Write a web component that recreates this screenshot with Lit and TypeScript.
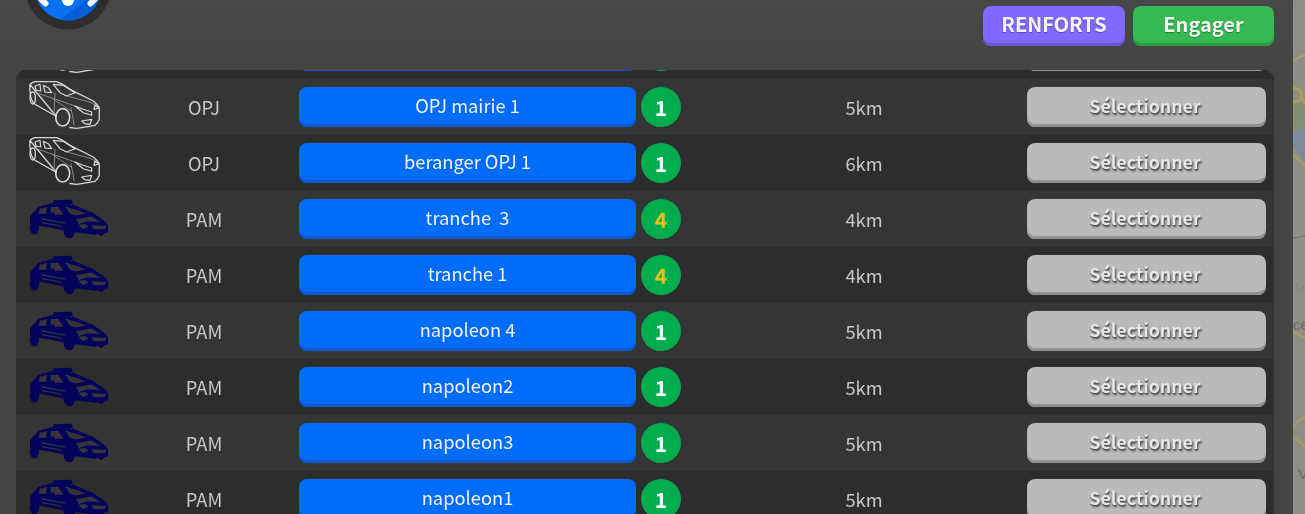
import { LitElement, html, css, svg } from "lit";
import { customElement } from "lit/decorators.js";

type Row = { kind: "opj" | "pam"; type: string; name: string; n: number; km: string };

const rows: Row[] = [
  { kind: "opj", type: "OPJ", name: "", n: 1, km: "" },
  { kind: "opj", type: "OPJ", name: "OPJ mairie 1", n: 1, km: "5km" },
  { kind: "opj", type: "OPJ", name: "beranger OPJ 1", n: 1, km: "6km" },
  { kind: "pam", type: "PAM", name: "tranche  3", n: 4, km: "4km" },
  { kind: "pam", type: "PAM", name: "tranche 1", n: 4, km: "4km" },
  { kind: "pam", type: "PAM", name: "napoleon 4", n: 1, km: "5km" },
  { kind: "pam", type: "PAM", name: "napoleon2", n: 1, km: "5km" },
  { kind: "pam", type: "PAM", name: "napoleon3", n: 1, km: "5km" },
  { kind: "pam", type: "PAM", name: "napoleon1", n: 1, km: "5km" },
];

const opjCar = svg`<svg class="car opj" viewBox="0 0 72 48" width="72" height="48" fill="none" stroke="#d8d8d8" stroke-linecap="round" stroke-linejoin="round">
  <path stroke-width="1.300" d="M1 3.500 Q3 .8 7.700 .3 L27.700 .7 Q34 3 41 8.300 L64.300 20 Q68 23 70.300 26.700 L70.300 38.300 Q69 42 66 44.300 L47.700 47.300 L41 46.500 M27.500 35.500 L6 23.300 Q2 20 1.500 14 Q.5 8 1 3.500 Z"/>
  <path stroke-width="1.200" d="M6 5 L11 3.300 L11.700 10 L7 9 Z M14.300 4.300 L19.300 6.700 L22.700 11.700 L16 11 Z M24.300 3.300 L34.300 4.300 L46 11.700 L37.700 15 L31 11.700 Z"/>
  <ellipse stroke-width="1.300" cx="3.700" cy="17" rx="2.700" ry="6"/>
  <ellipse stroke-width="1.600" cx="33.700" cy="36.300" rx="7" ry="8.700"/>
  <path stroke-width=".9" stroke="#909090" d="M5 11 L26 18 L46 25 M26 11.700 L25 34 M37.700 15 L62 21.500 L70 26.500 M42 27 Q44 36 45 44 M24 18 L42 30"/>
  <path stroke-width="1.200" d="M46 25 L54.300 31.700 L62.700 34.300 L62.700 31 L54.300 28.300 Z M52.700 40 L62.700 38.300 L61 43.300 L56 42.700 Z M66 24 L69.500 27 L65 28.500 Z"/>
</svg>`;

const pamCar = svg`<svg class="car" viewBox="0 0 80 40" width="80" height="40">
  <g fill="#03035a">
    <path d="M24.300 1.300 L42.700 .7 L43.700 5 L24.300 5 Z"/>
    <path d="M1 17.300 L9.300 8 L22.700 4 L44.300 5.700 L64.300 14 L77 23.300 L79.300 27.300 L78.700 33.300 L66 35.700 L46 33.300 L34.300 31.300 L11 27 L1 26 Z"/>
    <ellipse cx="5.300" cy="29" rx="4.700" ry="6.500"/>
    <ellipse cx="40.300" cy="32.300" rx="5.500" ry="7"/>
    <path d="M68 33 L76 33 Q74 37.500 71 37 Z"/>
  </g>
  <g fill="#34343a">
    <path d="M11 9.700 L17.700 8 L17 14.700 L9.300 14.700 Z M21.700 8 L29.300 8 L34.300 15.700 L26 15.700 L24 13 L21.700 14.700 Z M36 7.300 L57 14.300 L47.700 16.500 L41 14.700 Z"/>
    <path d="M13 19.500 L36 23.500 L36 24.700 L13 20.700 Z M13 23 L33 26.700 L33 27.800 L13 24.200 Z"/>
    <path d="M47 20 L62 17.500 L72 23 L58 22.500 L50 25 Z M49 26 L54 30 L60 28 L56 25 Z M63 26 L77 27 L76 30 L64 30 Z"/>
  </g>
</svg>`;

@customElement("app-root")
export class AppRoot extends LitElement {
  static styles = css`
    :host {
      display: flex;
      width: 1305px;
      height: 514px;
      overflow: hidden;
      font-family: "Noto Sans CJK JP", "Noto Sans", sans-serif;
    }
    .panel {
      width: 1293px;
      flex: none;
      background: linear-gradient(#484848, #444444 70px);
      box-sizing: border-box;
      padding: 0 19px 0 16px;
      display: flex;
      flex-direction: column;
    }
    .map {
      flex: 1;
      position: relative;
      background: #8f8f87;
      overflow: hidden;
    }
    .map svg {
      display: block;
    }
    .label {
      position: absolute;
      color: #6c6c68;
      font-size: 15px;
      line-height: 16px;
      font-family: "Liberation Sans", sans-serif;
    }
    .ces {
      left: 0;
      top: 317px;
    }
    .ve {
      left: 5px;
      top: 466px;
    }
    .head {
      flex: none;
      height: 70px;
      display: flex;
      justify-content: space-between;
      align-items: flex-start;
    }
    .logo {
      display: block;
      margin: -58px 0 0 8px;
    }
    .actions {
      display: flex;
      gap: 8px;
      padding-top: 6px;
      will-change: transform;
    }
    .action {
      width: 142px;
      height: 40px;
      box-sizing: border-box;
      border-radius: 8px;
      display: flex;
      align-items: center;
      justify-content: center;
      color: #f4f4f4;
      font-size: 20px;
      line-height: 24px;
      font-weight: 700;
      padding-bottom: 4px;
      text-shadow: 0 1px 1px rgba(0, 0, 0, 0.3);
    }
    .green {
      width: 141px;
      background: #35b951;
      box-shadow: inset 0 -3px 0 #2c9a43;
    }
    .purple {
      background: #8069ff;
      box-shadow: inset 0 -3px 0 #6a55d6;
    }
    .table {
      flex: 1;
      min-height: 0;
      overflow: hidden;
      border-radius: 10px 10px 0 0;
      background: #2d2d2d;
      will-change: transform;
    }
    .rows {
      margin-top: -47px;
    }
    .row {
      height: 56px;
      display: grid;
      grid-template-columns: 283px 337px 45px 346px 239px;
      align-items: center;
      color: #c8c8c8;
      font-size: 18.300px;
      line-height: 24px;
      background: #2d2d2d;
    }
    .row:nth-child(even) {
      background: #353535;
    }
    .carcell {
      display: grid;
      grid-template-columns: 100px 150px;
      align-items: center;
      padding-left: 13px;
      box-sizing: border-box;
    }
    .car {
      display: block;
    }
    .car.opj {
      margin-top: -4px;
    }
    .type {
      text-align: center;
    }
    .name {
      height: 40px;
      box-sizing: border-box;
      border-radius: 8px;
      background: #006cfb;
      box-shadow: inset 0 -3px 0 #0058d2;
      color: #f2f2f2;
      display: flex;
      align-items: center;
      justify-content: center;
      white-space: pre;
      padding-bottom: 5px;
    }
    .badge {
      width: 40px;
      height: 40px;
      margin-left: 5px;
      border-radius: 50%;
      background: #00ad4e;
      color: #fff;
      font-weight: 700;
      font-size: 21px;
      display: flex;
      align-items: center;
      justify-content: center;
    }
    .badge.multi {
      color: #f4c20d;
    }
    .km {
      text-align: center;
      padding-left: 20px;
    }
    .select {
      width: 239px;
      height: 40px;
      box-sizing: border-box;
      border-radius: 8px;
      background: #bababa;
      box-shadow: inset 0 -3px 0 #8f8f8f;
      color: #e8e8e8;
      font-weight: 700;
      font-size: 17.800px;
      display: flex;
      align-items: center;
      justify-content: center;
      padding: 0 3px 5px 0;
      text-shadow: 0 1px 0 #555, 1px 2px 2px #444;
    }
  `;

  render() {
    return html`
      <div class="panel">
        <div class="head">
          <svg class="logo" width="88" height="88" viewBox="0 0 88 88">
            <circle cx="44" cy="44" r="43.500" fill="#2e2e2e"/>
            <circle cx="44" cy="45" r="33.500" fill="#0a70ee"/>
            <path d="M36 77.500 A33.500 33.500 0 0 0 77 50 L62 58 Z" fill="#0060d8"/>
            <circle cx="44" cy="58" r="6" fill="#fff"/>
            <path d="M17 57 L21.500 61.500" stroke="#fff" stroke-width="6" stroke-linecap="round"/>
            <path d="M71 57 L66.500 61.500" stroke="#fff" stroke-width="6" stroke-linecap="round"/>
          </svg>
          <div class="actions">
            <div class="action purple">RENFORTS</div>
            <div class="action green">Engager</div>
          </div>
        </div>
        <div class="table">
          <div class="rows">
            ${rows.map(
              (r) => html`
                <div class="row">
                  <div class="carcell">
                    ${r.kind === "opj" ? opjCar : pamCar}
                    <div class="type">${r.type}</div>
                  </div>
                  <div class="name">${r.name}</div>
                  <div class="badge ${r.n > 1 ? "multi" : ""}">${r.n}</div>
                  <div class="km">${r.km}</div>
                  <div class="select">Sélectionner</div>
                </div>
              `
            )}
          </div>
        </div>
      </div>
      <div class="map">
        <svg width="12" height="514" viewBox="0 0 12 514" fill="none">
          <rect width="12" height="514" fill="#8f8f87"/>
          <path d="M0 103 L12 104 L12 123 L0 132 Z" fill="#7f8f72"/>
          <path d="M0 134 L12 124 L12 162 L4 150 L0 147 Z" fill="#7b8a9c"/>
          <path d="M0 60 Q6 58 12 55" stroke="#b0a062" stroke-width="2"/>
          <path d="M0 72 L12 72" stroke="#7f8a96" stroke-width="1"/>
          <path d="M0 88 Q8 88 9 96 Q7 103 0 102" stroke="#b89c50" stroke-width="2.500"/>
          <path d="M9 98 L12 104" stroke="#b89c50" stroke-width="2"/>
          <path d="M0 154 L12 166" stroke="#aa9c5e" stroke-width="2"/>
          <path d="M0 238 L12 236" stroke="#6e6e6c" stroke-width="1"/>
          <path d="M3 283 L6 290 M9 285 L10 288" stroke="#6f8a55" stroke-width="1"/>
          <path d="M0 331 L12 338" stroke="#b09c58" stroke-width="2"/>
          <path d="M0 428 Q5 420 12 417" stroke="#aa9c5e" stroke-width="2"/>
          <path d="M1 437 L12 447" stroke="#b09c58" stroke-width="2"/>
        </svg>
        <span class="label ces">ces</span>
        <span class="label ve">Ve</span>
      </div>
    `;
  }
}
